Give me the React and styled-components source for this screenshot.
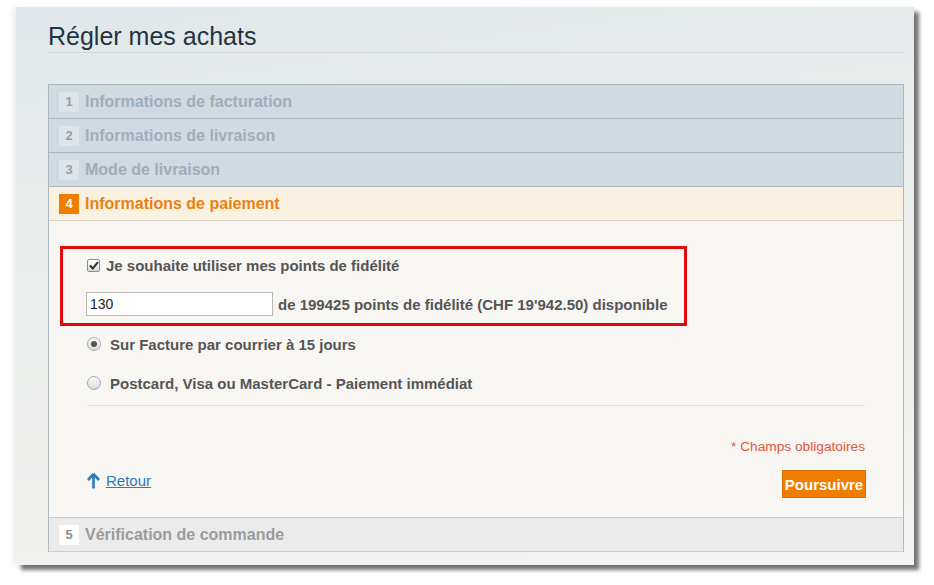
import React, { useState } from "react";
import styled, { createGlobalStyle } from "styled-components";

const GlobalStyle = createGlobalStyle`
  html, body {
    margin: 0;
    padding: 0;
    background: #ffffff;
  }
  body {
    font-family: "Liberation Sans", Arial, sans-serif;
  }
`;

const Page = styled.div`
  width: 934px;
  height: 585px;
  padding: 7px 0 0 16px;
  box-sizing: border-box;
`;

const Frame = styled.div`
  width: 898px;
  height: 558px;
  box-sizing: border-box;
  padding: 15px 10px 0 32px;
  background: linear-gradient(172deg, #e1e7ea 0%, #e9eceb 35%, #eff0ee 70%, #f4f4f2 100%);
  box-shadow: 5px 5px 4px rgba(0, 0, 0, 0.55), -3px 0 6px rgba(0, 0, 0, 0.07);
`;

const Title = styled.h1`
  margin: 0;
  font-size: 25px;
  font-weight: normal;
  line-height: 28px;
  color: #1f3443;
  padding-bottom: 2px;
  border-bottom: 1px solid #d3d7d8;
  margin-bottom: 31px;
`;

const Accordion = styled.div`
  border: 1px solid #aab7bf;
  border-bottom: none;
`;

const StepHead = styled.div`
  display: flex;
  align-items: center;
  height: 34px;
  box-sizing: border-box;
  padding-left: 10px;
  border-bottom: 1px solid ${(p) => (p.$state === "active" ? "#ddd4c6" : p.$state === "next" ? "#cfcfcf" : "#aab7bf")};
  background: ${(p) => (p.$state === "active" ? "#faf1e1" : p.$state === "next" ? "#ebebeb" : "#cfdae1")};
  color: ${(p) => (p.$state === "active" ? "#e98210" : p.$state === "next" ? "#9b9b9b" : "#9dafba")};
  font-size: 16px;
  font-weight: bold;
`;

const StepNum = styled.span`
  display: inline-flex;
  align-items: center;
  justify-content: center;
  width: 20px;
  height: 20px;
  margin-right: 6px;
  font-size: 13px;
  font-weight: bold;
  background: ${(p) => (p.$state === "active" ? "#ef7d00" : p.$state === "next" ? "#ffffff" : "#dde5ea")};
  color: ${(p) => (p.$state === "active" ? "#ffffff" : p.$state === "next" ? "#8e8e8e" : "#92a3ad")};
`;

const Body = styled.div`
  background: #f8f6f3;
  border-bottom: 1px solid #d3cbbf;
  height: 297px;
  box-sizing: border-box;
  padding: 25px 38px 0 38px;
  color: #555555;
  font-size: 15px;
  font-weight: bold;
`;

const Highlight = styled.div`
  width: 627px;
  height: 80px;
  box-sizing: border-box;
  margin-left: -27px;
  border: 3px solid #e10a0a;
  padding: 5px 0 0 24px;
`;

const Row = styled.label`
  display: flex;
  align-items: center;
  height: ${(p) => p.$h || 22}px;
  gap: ${(p) => p.$gap || 6}px;
  cursor: pointer;
`;

const Box = styled.span`
  width: 13px;
  height: 13px;
  box-sizing: border-box;
  border: 1px solid #8d8d8d;
  border-radius: 2px;
  background: linear-gradient(#fdfdfd, #d9d9d9);
  display: inline-flex;
  align-items: center;
  justify-content: center;
`;

const Field = styled.input`
  width: 187px;
  height: 24px;
  box-sizing: border-box;
  border: 1px solid #b7b7b7;
  padding: 0 3px;
  font-family: "Liberation Sans", Arial, sans-serif;
  font-size: 14px;
  color: #222;
  background: #fff;
  outline: none;
`;

const InputRow = styled.div`
  display: flex;
  align-items: center;
  gap: 5px;
  margin-top: 16px;
  margin-left: -1px;
`;

const Radios = styled.div`
  display: flex;
  flex-direction: column;
  gap: 17px;
  margin-top: 7px;
  padding-bottom: 11px;
  border-bottom: 1px solid #e2ded8;
`;

const Dot = styled.span`
  width: 14px;
  height: 14px;
  box-sizing: border-box;
  border-radius: 50%;
  border: 1px solid #a9a9a9;
  background: linear-gradient(#fafafa, #dcdcdc);
  display: inline-flex;
  align-items: center;
  justify-content: center;
  &::after {
    content: "";
    width: 6px;
    height: 6px;
    border-radius: 50%;
    background: ${(p) => (p.$on ? "#555" : "transparent")};
  }
`;

const Required = styled.div`
  text-align: right;
  color: #e2553c;
  font-size: 13.7px;
  font-weight: normal;
  margin-top: 33px;
`;

const Actions = styled.div`
  display: flex;
  justify-content: space-between;
  align-items: flex-end;
  margin-top: 16px;
`;

const Back = styled.a`
  display: flex;
  align-items: center;
  gap: 6px;
  color: #2b7bbd;
  font-weight: normal;
  font-size: 15px;
  margin-bottom: 9px;
  span {
    text-decoration: underline;
  }
`;

const Button = styled.button`
  width: 84px;
  height: 28px;
  margin-right: -1px;
  border: 1px solid #d86f00;
  background: #ef7d00;
  color: #fff;
  font-family: "Liberation Sans", Arial, sans-serif;
  font-weight: bold;
  font-size: 15px;
  padding: 0;
  cursor: pointer;
`;

const steps = [
  { n: 1, label: "Informations de facturation" },
  { n: 2, label: "Informations de livraison" },
  { n: 3, label: "Mode de livraison" },
];

export default function App() {
  const [points, setPoints] = useState("130");
  const [useFid, setUseFid] = useState(true);
  const [method, setMethod] = useState("facture");

  return (
    <>
      <GlobalStyle />
      <Page>
        <Frame>
          <Title>Régler mes achats</Title>
          <Accordion>
            {steps.map((s) => (
              <StepHead key={s.n} $state="done">
                <StepNum $state="done">{s.n}</StepNum>
                {s.label}
              </StepHead>
            ))}
            <StepHead $state="active">
              <StepNum $state="active">4</StepNum>
              Informations de paiement
            </StepHead>
            <Body>
              <Highlight>
                <Row $h={22} onClick={() => setUseFid(!useFid)}>
                  <Box>
                    {useFid && (
                      <svg width="10" height="9" viewBox="0 0 10 9">
                        <path d="M1 4.5 L3.8 7.5 L9 1.2" fill="none" stroke="#333" strokeWidth="2" />
                      </svg>
                    )}
                  </Box>
                  Je souhaite utiliser mes points de fidélité
                </Row>
                <InputRow>
                  <Field value={points} onChange={(e) => setPoints(e.target.value)} />
                  de 199425 points de fidélité (CHF 19'942.50) disponible
                </InputRow>
              </Highlight>
              <Radios>
                <Row $h={22} $gap={9} onClick={() => setMethod("facture")}>
                  <Dot $on={method === "facture"} />
                  Sur Facture par courrier à 15 jours
                </Row>
                <Row $h={22} $gap={9} onClick={() => setMethod("carte")}>
                  <Dot $on={method === "carte"} />
                  Postcard, Visa ou MasterCard - Paiement immédiat
                </Row>
              </Radios>
              <Required>* Champs obligatoires</Required>
              <Actions>
                <Back href="#">
                  <svg width="13" height="16" viewBox="0 0 13 16">
                    <path d="M6.5 1 L1 7 M6.5 1 L12 7 M6.5 1 L6.5 15.5" fill="none" stroke="#2b7bbd" strokeWidth="2.6" strokeLinecap="butt" />
                  </svg>
                  <span>Retour</span>
                </Back>
                <Button>Poursuivre</Button>
              </Actions>
            </Body>
            <StepHead $state="next">
              <StepNum $state="next">5</StepNum>
              Vérification de commande
            </StepHead>
          </Accordion>
        </Frame>
      </Page>
    </>
  );
}
